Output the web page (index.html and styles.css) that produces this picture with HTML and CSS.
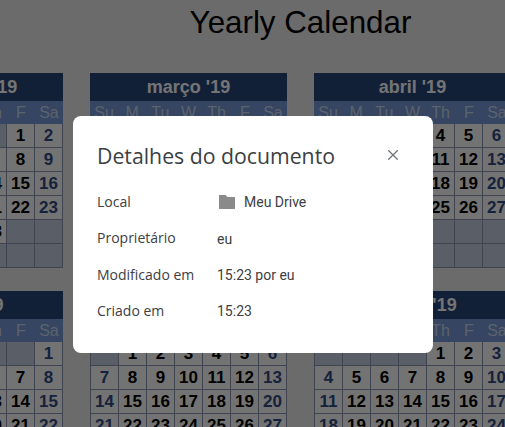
FILE: index.html
```html
<!DOCTYPE html>
<html lang="pt">
<head>
<meta charset="utf-8">
<title>Yearly Calendar</title>
<link rel="stylesheet" href="styles.css">
</head>
<body>
<main class="page">
<h1 class="title">Yearly Calendar</h1>
<div class="months">
<section class="month"><h2>fevereiro '19</h2><div class="dow"><span>Su</span><span>M</span><span>Tu</span><span>W</span><span>Th</span><span>F</span><span>Sa</span></div><div class="days">
<i></i><i></i><i></i><i></i><i></i><b>1</b><b class="we">2</b>
<b class="we">3</b><b>4</b><b>5</b><b>6</b><b>7</b><b>8</b><b class="we">9</b>
<b class="we">10</b><b>11</b><b>12</b><b>13</b><b>14</b><b>15</b><b class="we">16</b>
<b class="we">17</b><b>18</b><b>19</b><b>20</b><b>21</b><b>22</b><b class="we">23</b>
<b class="we">24</b><b>25</b><b>26</b><b>27</b><b>28</b><i></i><i></i>
<i></i><i></i><i></i><i></i><i></i><i></i><i></i>
</div></section>
<section class="month"><h2>março '19</h2><div class="dow"><span>Su</span><span>M</span><span>Tu</span><span>W</span><span>Th</span><span>F</span><span>Sa</span></div><div class="days">
<i></i><i></i><i></i><i></i><i></i><b>1</b><b class="we">2</b>
<b class="we">3</b><b>4</b><b>5</b><b>6</b><b>7</b><b>8</b><b class="we">9</b>
<b class="we">10</b><b>11</b><b>12</b><b>13</b><b>14</b><b>15</b><b class="we">16</b>
<b class="we">17</b><b>18</b><b>19</b><b>20</b><b>21</b><b>22</b><b class="we">23</b>
<b class="we">24</b><b>25</b><b>26</b><b>27</b><b>28</b><b>29</b><b class="we">30</b>
<b class="we">31</b><i></i><i></i><i></i><i></i><i></i><i></i>
</div></section>
<section class="month"><h2>abril '19</h2><div class="dow"><span>Su</span><span>M</span><span>Tu</span><span>W</span><span>Th</span><span>F</span><span>Sa</span></div><div class="days">
<i></i><b>1</b><b>2</b><b>3</b><b>4</b><b>5</b><b class="we">6</b>
<b class="we">7</b><b>8</b><b>9</b><b>10</b><b>11</b><b>12</b><b class="we">13</b>
<b class="we">14</b><b>15</b><b>16</b><b>17</b><b>18</b><b>19</b><b class="we">20</b>
<b class="we">21</b><b>22</b><b>23</b><b>24</b><b>25</b><b>26</b><b class="we">27</b>
<b class="we">28</b><b>29</b><b>30</b><i></i><i></i><i></i><i></i>
<i></i><i></i><i></i><i></i><i></i><i></i><i></i>
</div></section>
<section class="month"><h2>maio '19</h2><div class="dow"><span>Su</span><span>M</span><span>Tu</span><span>W</span><span>Th</span><span>F</span><span>Sa</span></div><div class="days">
<i></i><i></i><i></i><b>1</b><b>2</b><b>3</b><b class="we">4</b>
</div></section>
<section class="month"><h2>junho '19</h2><div class="dow"><span>Su</span><span>M</span><span>Tu</span><span>W</span><span>Th</span><span>F</span><span>Sa</span></div><div class="days">
<i></i><i></i><i></i><i></i><i></i><i></i><b class="we">1</b>
<b class="we">2</b><b>3</b><b>4</b><b>5</b><b>6</b><b>7</b><b class="we">8</b>
<b class="we">9</b><b>10</b><b>11</b><b>12</b><b>13</b><b>14</b><b class="we">15</b>
<b class="we">16</b><b>17</b><b>18</b><b>19</b><b>20</b><b>21</b><b class="we">22</b>
</div></section>
<section class="month"><h2>julho '19</h2><div class="dow"><span>Su</span><span>M</span><span>Tu</span><span>W</span><span>Th</span><span>F</span><span>Sa</span></div><div class="days">
<i></i><b>1</b><b>2</b><b>3</b><b>4</b><b>5</b><b class="we">6</b>
<b class="we">7</b><b>8</b><b>9</b><b>10</b><b>11</b><b>12</b><b class="we">13</b>
<b class="we">14</b><b>15</b><b>16</b><b>17</b><b>18</b><b>19</b><b class="we">20</b>
<b class="we">21</b><b>22</b><b>23</b><b>24</b><b>25</b><b>26</b><b class="we">27</b>
</div></section>
<section class="month"><h2>agosto '19</h2><div class="dow"><span>Su</span><span>M</span><span>Tu</span><span>W</span><span>Th</span><span>F</span><span>Sa</span></div><div class="days">
<i></i><i></i><i></i><i></i><b>1</b><b>2</b><b class="we">3</b>
<b class="we">4</b><b>5</b><b>6</b><b>7</b><b>8</b><b>9</b><b class="we">10</b>
<b class="we">11</b><b>12</b><b>13</b><b>14</b><b>15</b><b>16</b><b class="we">17</b>
<b class="we">18</b><b>19</b><b>20</b><b>21</b><b>22</b><b>23</b><b class="we">24</b>
</div></section>
</div>
</main>
<div class="scrim">
<div class="dialog" role="dialog">
<header class="dialog-head">
<h2>Detalhes do documento</h2>
<button class="close" aria-label="Fechar"><svg width="10" height="10" viewBox="0 0 10 10"><path d="M.3.3l9.400 9.400M9.700.3L.3 9.700"/></svg></button>
</header>
<dl class="details">
<dt>Local</dt><dd class="loc"><svg width="16" height="14" viewBox="0 0 16 14"><path d="M0 0h6.500l2 2H16v12H0z"/></svg>Meu Drive</dd>
<dt>Proprietário</dt><dd>eu</dd>
<dt>Modificado em</dt><dd>15:23 por eu</dd>
<dt>Criado em</dt><dd>15:23</dd>
</dl>
</div>
</div>
</body>
</html>
```
FILE: styles.css
```css
html, body { margin: 0; height: 100%; overflow: hidden; }
body { background: #d6d6d6; font-family: "Liberation Sans", Arial, sans-serif; }
.page { width: 869px; margin-left: -134px; }
.title { margin: 0; height: 73px; padding-top: 5px; box-sizing: border-box; text-align: center; font-size: 31.33px; line-height: 36px; font-weight: 400; color: #000; }
.months { display: grid; grid-template-columns: repeat(4, 197px); gap: 23px 27px; }
.month h2 { margin: 0; height: 28px; background: #24406f; color: #e8e8e8; font-size: 18px; line-height: 28px; text-align: center; font-weight: 700; }
.dow { display: grid; grid-template-columns: repeat(7, 1fr); height: 23px; background: #6c8cc4; color: #b8c4d8; font-size: 16px; line-height: 23px; text-align: center; }
.days { display: grid; grid-template-columns: repeat(7, 27px); grid-auto-rows: 23px; gap: 1px; padding: 0 1px 1px 1px; background: #8088a0; }
.days b, .days i { display: block; background: #e6e6e6; font-size: 17px; line-height: 23px; text-align: center; font-style: normal; color: #000; }
.days i { background: #b4bccf; }
.days .we { color: #2c4478; }
.scrim { position: fixed; inset: 0; background: rgba(0,0,0,.5); display: flex; align-items: flex-start; justify-content: flex-start; }
.dialog { margin: 116px 0 0 73px; width: 360px; height: 237px; box-sizing: border-box; padding: 24px; background: #fff; border-radius: 8px; color: #3c4043; }
.dialog-head { display: flex; justify-content: space-between; align-items: center; height: 30px; }
.dialog-head h2 { margin: 0; font-family: "Open Sans", sans-serif; font-size: 21.25px; font-weight: 400; }
.close { border: 0; background: none; padding: 0; margin-right: 11px; width: 10px; height: 10px; display: flex; }
.close path { stroke: #707478; stroke-width: 1.3; fill: none; }
.details { display: grid; grid-template-columns: 120px 1fr; grid-template-rows: 36px 37px 36px 36px; align-items: center; margin: 14px 0 0; }
.details dt { font-family: "Open Sans", sans-serif; font-size: 14px; padding-bottom: 2px; }
.details dd { margin: 0; font-family: Roboto, sans-serif; font-size: 14px; }
.loc { display: flex; align-items: center; gap: 9px; }
.loc svg { margin-left: 2px; }
.loc path { fill: #8a8a8a; }
```
